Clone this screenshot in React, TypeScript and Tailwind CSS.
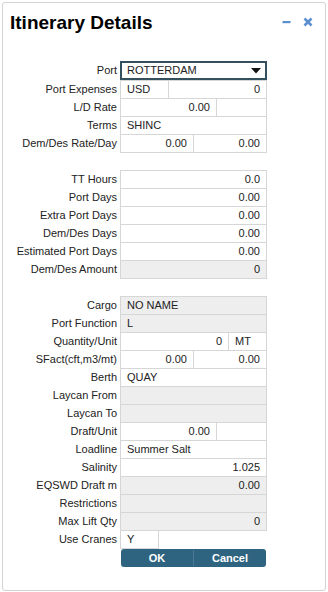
import React from 'react';

type Cell = { text?: string; align?: 'left' | 'right'; gray?: boolean };
type Row = { label: string; edges: number[]; cells: Cell[] };

// x positions of the cell borders, column starts at 120
const full = [120, 266];

const group1: Row[] = [
  { label: 'Port Expenses', edges: [120, 168, 266], cells: [{ text: 'USD' }, { text: '0', align: 'right' }] },
  { label: 'L/D Rate', edges: [120, 216, 266], cells: [{ text: '0.00', align: 'right' }, {}] },
  { label: 'Terms', edges: full, cells: [{ text: 'SHINC' }] },
  { label: 'Dem/Des Rate/Day', edges: [120, 193, 266], cells: [{ text: '0.00', align: 'right' }, { text: '0.00', align: 'right' }] },
];

const group2: Row[] = [
  { label: 'TT Hours', edges: full, cells: [{ text: '0.0', align: 'right' }] },
  { label: 'Port Days', edges: full, cells: [{ text: '0.00', align: 'right' }] },
  { label: 'Extra Port Days', edges: full, cells: [{ text: '0.00', align: 'right' }] },
  { label: 'Dem/Des Days', edges: full, cells: [{ text: '0.00', align: 'right' }] },
  { label: 'Estimated Port Days', edges: full, cells: [{ text: '0.00', align: 'right' }] },
  { label: 'Dem/Des Amount', edges: full, cells: [{ text: '0', align: 'right', gray: true }] },
];

const group3: Row[] = [
  { label: 'Cargo', edges: full, cells: [{ text: 'NO NAME', gray: true }] },
  { label: 'Port Function', edges: full, cells: [{ text: 'L', gray: true }] },
  { label: 'Quantity/Unit', edges: [120, 228, 266], cells: [{ text: '0', align: 'right' }, { text: 'MT' }] },
  { label: 'SFact(cft,m3/mt)', edges: [120, 193, 266], cells: [{ text: '0.00', align: 'right' }, { text: '0.00', align: 'right' }] },
  { label: 'Berth', edges: full, cells: [{ text: 'QUAY' }] },
  { label: 'Laycan From', edges: full, cells: [{ gray: true }] },
  { label: 'Laycan To', edges: full, cells: [{ gray: true }] },
  { label: 'Draft/Unit', edges: [120, 216, 266], cells: [{ text: '0.00', align: 'right' }, {}] },
  { label: 'Loadline', edges: full, cells: [{ text: 'Summer Salt' }] },
  { label: 'Salinity', edges: full, cells: [{ text: '1.025', align: 'right' }] },
  { label: 'EQSWD Draft m', edges: full, cells: [{ text: '0.00', align: 'right', gray: true }] },
  { label: 'Restrictions', edges: full, cells: [{ gray: true }] },
  { label: 'Max Lift Qty', edges: full, cells: [{ text: '0', align: 'right', gray: true }] },
  { label: 'Use Cranes', edges: [120, 158], cells: [{ text: 'Y' }] },
];

function Label({ children }: { children: React.ReactNode }) {
  return (
    <div className="w-[117px] shrink-0 pr-[3px] text-right leading-[17px] h-[19px] pt-px text-[11px] text-[#222]">
      {children}
    </div>
  );
}

function FieldRow({ row, first }: { row: Row; first: boolean }) {
  return (
    <div className={`flex ${first ? '' : '-mt-px'}`}>
      <Label>{row.label}</Label>
      <div className="flex">
        {row.cells.map((c, i) => (
          <div
            key={i}
            style={{ width: row.edges[i + 1] - row.edges[i] + 1 }}
            className={`h-[19px] border border-[#d6d6d6] px-[6px] text-[11px] leading-[17px] text-[#222] whitespace-nowrap overflow-hidden ${
              i > 0 ? '-ml-px' : ''
            } ${c.align === 'right' ? 'text-right' : 'text-left'} ${c.gray ? 'bg-[#eeeeee]' : 'bg-white'}`}
          >
            {c.text}
          </div>
        ))}
      </div>
    </div>
  );
}

function Group({ rows, className = '' }: { rows: Row[]; className?: string }) {
  return (
    <div className={className}>
      {rows.map((r, i) => (
        <FieldRow key={r.label} row={r} first={i === 0} />
      ))}
    </div>
  );
}

export default function App() {
  return (
    <div className="w-[328px] h-[592px] bg-white font-['Liberation_Sans',Arial,sans-serif] pt-[2px] pl-[2px]">
      <div className="w-[324px] h-[589px] border border-[#d2d2d2] rounded-[3px] bg-white">
        <div className="flex items-start pt-[9px] pl-[7px] pr-[12px]">
          <h1 className="text-[19px] leading-[22px] font-bold text-black">Itinerary Details</h1>
          <div className="ml-auto flex items-center gap-[12px] mt-[4px]">
            <svg width="9" height="12" viewBox="0 0 9 12">
              <rect x="0.5" y="5" width="8" height="2.2" fill="#5b8fd0" />
            </svg>
            <svg width="10" height="12" viewBox="0 0 10 12">
              <path d="M1.5 2.5 L8.5 9.5 M8.5 2.5 L1.5 9.5" stroke="#5b8fd0" strokeWidth="2.6" strokeLinecap="butt" />
            </svg>
          </div>
        </div>

        <div className="mt-[27px]">
          <div className="flex">
            <Label>Port</Label>
            <div className="w-[147px] h-[19px] border-2 border-[#33505c] bg-white flex items-center pl-[5px] pr-[4px] text-[11px] text-[#222]">
              <span className="leading-[15px]">ROTTERDAM</span>
              <svg className="ml-auto" width="10" height="6" viewBox="0 0 10 6">
                <path d="M0 0 H10 L5 5.5 Z" fill="#111" />
              </svg>
            </div>
          </div>
          <Group rows={group1} />
          <Group rows={group2} className="mt-[17px]" />
          <Group rows={group3} className="mt-[17px]" />
          <div className="flex">
            <div className="w-[118px] shrink-0" />
            <div className="flex w-[145px] h-[18px] rounded-[3px] bg-[#2f6480] text-white text-[11px] font-bold leading-[18px] overflow-hidden">
              <button className="w-[72px] text-center">OK</button>
              <div className="w-px bg-[#4a7a93] my-[1px]" />
              <button className="flex-1 text-center">Cancel</button>
            </div>
          </div>
        </div>
      </div>
    </div>
  );
}
